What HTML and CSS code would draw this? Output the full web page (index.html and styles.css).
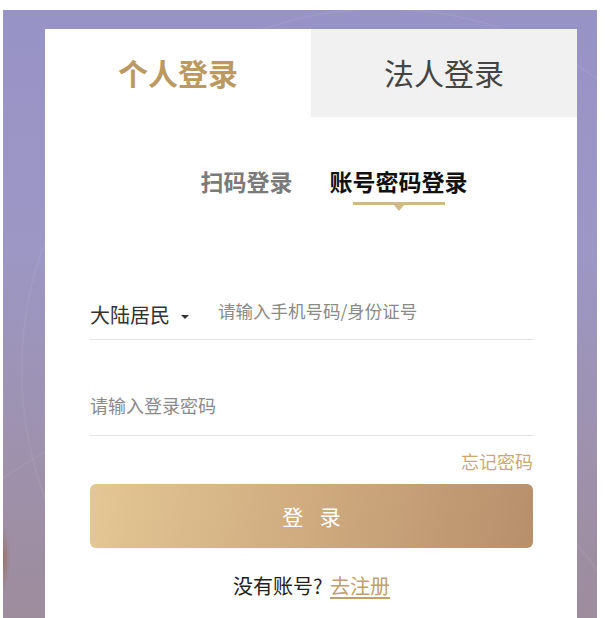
FILE: index.html
```html
<!DOCTYPE html>
<html lang="zh-CN">
<head>
<meta charset="utf-8">
<title>登录</title>
<link rel="stylesheet" href="styles.css">
</head>
<body>
<div class="scene">
  <div class="card">
    <div class="tabs">
      <div class="tab tab-active">个人登录</div>
      <div class="tab tab-other">法人登录</div>
    </div>
    <div class="subtabs">
      <div class="subtab">扫码登录</div>
      <div class="subtab subtab-active">
        <span>账号密码登录</span>
        <i class="indicator"></i>
      </div>
    </div>
    <form class="form">
      <div class="row row-phone">
        <div class="region">大陆居民<span class="caret"></span></div>
        <input class="field field-phone" type="text" placeholder="请输入手机号码/身份证号">
      </div>
      <div class="row row-pass">
        <input class="field" type="password" placeholder="请输入登录密码">
      </div>
      <div class="forget"><a href="#">忘记密码</a></div>
      <button class="submit" type="button">登 录</button>
      <div class="register">没有账号? <a href="#">去注册</a></div>
    </form>
  </div>
</div>
</body>
</html>
```
FILE: styles.css
```css
html, body {
  margin: 0;
  padding: 0;
  background: #ffffff;
}
body {
  font-family: "Noto Sans CJK SC", "Noto Sans", sans-serif;
  overflow: hidden;
}
.scene {
  box-sizing: border-box;
  width: 594px;
  height: 608px;
  margin: 10px 0 0 3px;
  padding: 19px 20px 0 42px;
  position: relative;
  overflow: hidden;
  background:
    radial-gradient(ellipse 7px 34px at 0 548px, rgba(150, 100, 70, 0.6) 0, rgba(150, 100, 70, 0) 100%),
    radial-gradient(circle at 250px 820px, rgba(255,255,255,0) 0, rgba(255,255,255,0) 430px, rgba(255,255,255,0.06) 431px, rgba(255,255,255,0) 433px),
    radial-gradient(circle at 380px 360px, rgba(255,255,255,0) 0, rgba(255,255,255,0) 360px, rgba(255,255,255,0.06) 361px, rgba(255,255,255,0) 363px),
    linear-gradient(180deg, #9893c6 0%, #9c97c4 40%, #9e90a8 80%, #9d8c9c 100%);
}
.card {
  background: #ffffff;
  width: 532px;
  height: 100%;
  position: relative;
  z-index: 1;
}
.tabs {
  display: grid;
  grid-template-columns: 266px 266px;
  height: 88px;
}
.tab {
  display: flex;
  align-items: center;
  justify-content: center;
  font-size: 30px;
  line-height: 40px;
  padding-bottom: 3px;
}
.tab-active {
  color: #bb9a61;
  font-weight: 700;
  background: #ffffff;
}
.tab-other {
  color: #444444;
  background: #f1f1f1;
}
.subtabs {
  display: flex;
  justify-content: center;
  gap: 37px;
  padding-left: 46px;
  margin-top: 49px;
}
.subtab {
  font-size: 23px;
  line-height: 30px;
  font-weight: 700;
  color: #7a7a7a;
}
.subtab-active {
  color: #111111;
  display: flex;
  flex-direction: column;
  align-items: center;
}
.indicator {
  display: block;
  width: 92px;
  height: 3px;
  margin-top: 6px;
  background: #cfb98a;
  position: relative;
}
.indicator::after {
  content: "";
  position: absolute;
  left: 41px;
  top: 3px;
  border-left: 5px solid transparent;
  border-right: 5px solid transparent;
  border-top: 6px solid #cfb98a;
}
.form {
  margin: 85px 44px 0 45px;
}
.row {
  display: flex;
  border-bottom: 1px solid #e3e3e3;
}
.row-phone {
  height: 49px;
  align-items: center;
}
.region {
  display: flex;
  align-items: center;
  font-size: 20px;
  line-height: 24px;
  color: #333333;
  margin-top: 1px;
  flex: none;
}
.caret {
  display: inline-block;
  margin-left: 11px;
  margin-top: 3px;
  border-left: 4px solid transparent;
  border-right: 4px solid transparent;
  border-top: 4px solid #333333;
}
.field {
  border: none;
  outline: none;
  background: transparent;
  padding: 0;
  margin: 0;
  font-family: inherit;
  font-size: 18px;
  line-height: 24px;
  height: 24px;
  color: #333333;
  flex: 1;
  min-width: 0;
}
.field::placeholder {
  color: #8a8a8a;
}
.field-phone {
  margin-left: 29px;
  margin-bottom: 8px;
  font-size: 17.5px;
}
.row-pass {
  height: 96px;
  align-items: flex-end;
  box-sizing: border-box;
  padding-bottom: 18px;
}
.forget {
  margin-top: 13px;
  text-align: right;
  font-size: 18px;
  line-height: 24px;
}
.forget a {
  color: #c8a97a;
  text-decoration: none;
}
.submit {
  display: block;
  width: 100%;
  height: 64px;
  margin-top: 11px;
  border: none;
  border-radius: 6px;
  background: linear-gradient(100deg, #e3c794 0%, #d3b083 40%, #b88f6b 100%);
  color: #ffffff;
  font-family: inherit;
  font-size: 21px;
  word-spacing: 12px;
  padding: 0;
}
.register {
  margin-top: 25px;
  text-align: center;
  font-size: 20px;
  line-height: 26px;
  color: #222222;
  word-spacing: 3px;
}
.register a {
  color: #c0a06c;
  text-decoration: underline;
  text-underline-offset: 3px;
}
```
